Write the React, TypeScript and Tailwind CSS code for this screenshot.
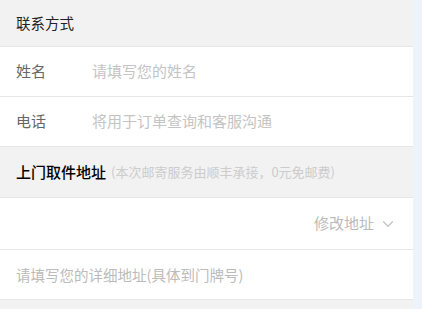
import { ChevronDown } from "lucide-react";

const font = { fontFamily: '"Noto Sans CJK SC", "Noto Sans", sans-serif' };

function SectionHeader({ title, note, tall }: { title: string; note?: string; tall?: boolean }) {
  return (
    <div
      className={`flex items-center px-4 bg-[#f2f2f2] border-b border-[#e6e6e6] ${tall ? "h-[51px]" : "h-[47px]"}`}
    >
      <span className={note ? "text-[15px] text-black font-medium" : "text-[14.5px] text-[#222]"}>
        {title}
      </span>
      {note && <span className="ml-[5px] text-[13px] text-[#cccccc]">{note}</span>}
    </div>
  );
}

function FieldRow({ label, placeholder }: { label: string; placeholder: string }) {
  return (
    <div className="flex h-[50px] items-center px-4 bg-white border-b border-[#e6e6e6]">
      <span className="w-[76px] text-[15px] text-[#666]">{label}</span>
      <span className="text-[15px] text-[#c4c4c4]">{placeholder}</span>
    </div>
  );
}

export default function App() {
  return (
    <div className="flex h-[309px] w-[422px] bg-[#eef2fb] overflow-hidden" style={font}>
      <div className="flex w-[413px] flex-col bg-[#f2f2f2]">
        <SectionHeader title="联系方式" />
        <FieldRow label="姓名" placeholder="请填写您的姓名" />
        <FieldRow label="电话" placeholder="将用于订单查询和客服沟通" />
        <SectionHeader title="上门取件地址" note="(本次邮寄服务由顺丰承接，0元免邮费)" tall />
        <div className="flex h-[52px] items-center justify-end pl-4 pr-[16px] bg-white border-b border-[#e6e6e6]">
          <span className="text-[15px] text-[#bbbbbb]">修改地址</span>
          <ChevronDown className="ml-[5px] h-[18px] w-[18px] text-[#c4c4c4]" strokeWidth={1.75} />
        </div>
        <div className="flex h-[50px] items-center px-4 bg-white border-b border-[#e6e6e6]">
          <span className="text-[14.5px] text-[#bbbbbb]">请填写您的详细地址(具体到门牌号)</span>
        </div>
      </div>
    </div>
  );
}
